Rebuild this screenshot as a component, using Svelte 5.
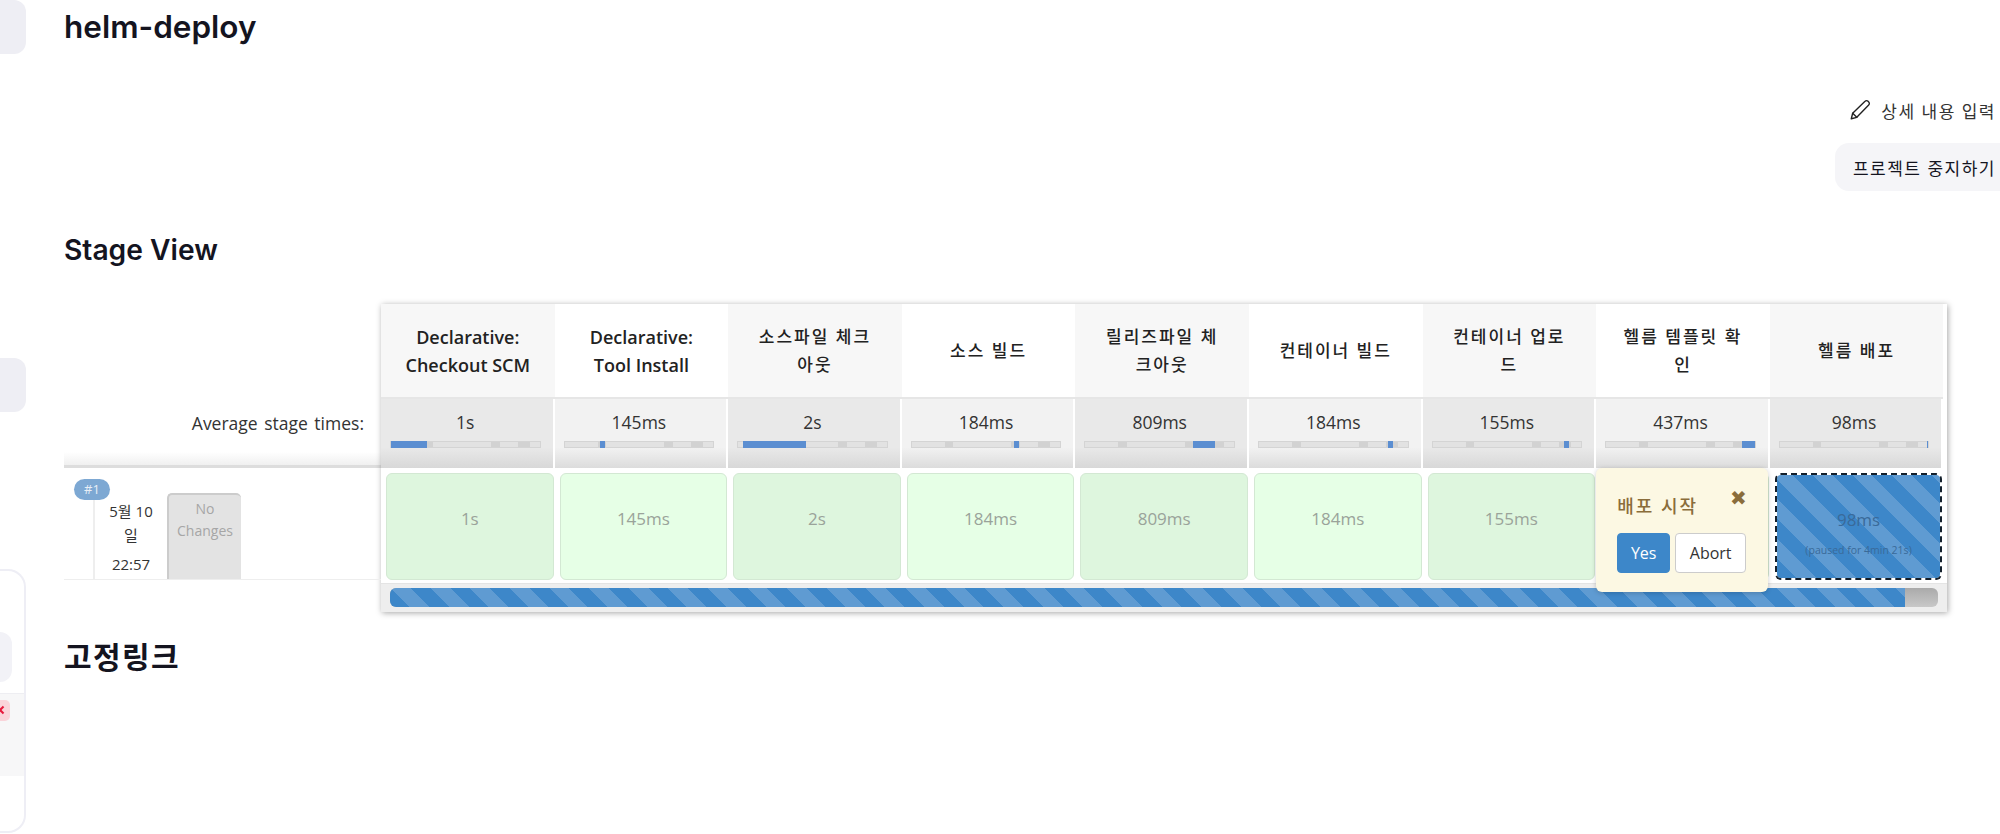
<script lang="ts">
  const stages = [
    { name: "Declarative: Checkout SCM", time: "1s", left: 0, width: 24.5 },
    { name: "Declarative: Tool Install", time: "145ms", left: 24, width: 3.5 },
    { name: "소스파일 체크아웃", time: "2s", left: 3.5, width: 42 },
    { name: "소스 빌드", time: "184ms", left: 68.5, width: 3.5 },
    { name: "릴리즈파일 체크아웃", time: "809ms", left: 72.5, width: 14.5 },
    { name: "컨테이너 빌드", time: "184ms", left: 86.5, width: 3.5 },
    { name: "컨테이너 업로드", time: "155ms", left: 88.5, width: 3.5 },
    { name: "헬름 템플릿 확인", time: "437ms", left: 91.5, width: 8.5 },
    { name: "헬름 배포", time: "98ms", left: 98.8, width: 1.2 },
  ];
</script>

<div class="page">
  <aside class="side">
    <div class="chip top"></div>
    <div class="chip mid"></div>
    <div class="card">
      <div class="card-btn"></div>
      <div class="card-row">
        <span class="card-badge"></span>
      </div>
    </div>
  </aside>

  <main class="main">
    <h1>helm-deploy</h1>

    <div class="actions">
      <a class="edit" href="#edit">
        <svg width="22" height="22" viewBox="0 0 24 24" fill="none" stroke="#222" stroke-width="1.5" stroke-linejoin="round" stroke-linecap="round">
          <path d="M2.5 21.5l1.5-6L17.5 2.5a2.3 2.3 0 0 1 3.3 0l.7.7a2.3 2.3 0 0 1 0 3.3L8.5 20l-6 1.5z" />
          <path d="M4 15.5L8.5 20" />
        </svg>
        <span>상세 내용 입력</span>
      </a>
      <button type="button" class="stop">프로젝트 중지하기</button>
    </div>

    <h2 class="stage-title">Stage View</h2>

    <div class="stage">
      <div class="runs">
        <div class="runs-head"></div>
        <div class="avg-label">Average stage times:</div>
        <div class="run">
          <span class="run-no">#1</span>
          <div class="run-date">
            <div class="day">5월 10일</div>
            <div class="clock">22:57</div>
          </div>
          <div class="run-changes">No Changes</div>
        </div>
      </div>

      <div class="table">
        <div class="row">
          {#each stages as s, i}
            <div class="head" class:odd={i % 2 === 0} class:latin={i < 2}>{s.name}</div>
          {/each}
        </div>
        <div class="row">
          {#each stages as s, i}
            <div class="avg" class:odd={i % 2 === 0}>
              <div class="avg-time">{s.time}</div>
              <div class="tl">
                <span class="tl-on" style="left:{s.left}%;width:{s.width}%"></span>
              </div>
            </div>
          {/each}
        </div>
        <div class="row">
          {#each stages as s, i}
            <div class="slot">
              {#if i === 8}
                <div class="cell paused">
                  <div class="cell-time">{s.time}</div>
                  <div class="cell-note">(paused for 4min 21s)</div>
                </div>
              {:else if i === 7}
                <div class="cell"></div>
                <div class="popup">
                  <div class="popup-top">
                    <span class="popup-title">배포 시작</span>
                    <span class="popup-close">✖</span>
                  </div>
                  <div class="popup-btns">
                    <button type="button" class="yes">Yes</button>
                    <button type="button" class="abort">Abort</button>
                  </div>
                </div>
              {:else}
                <div class="cell" class:odd={i % 2 === 0}>
                  <div class="cell-time">{s.time}</div>
                </div>
              {/if}
            </div>
          {/each}
        </div>
        <div class="progress">
          <div class="progress-track"><div class="progress-bar"></div></div>
        </div>
      </div>
    </div>

    <h2 class="link-title">고정링크</h2>
  </main>
</div>

<style>
  :global(body) {
    background: #fff;
  }

  .page {
    display: flex;
    width: 2000px;
    height: 834px;
    overflow: hidden;
    background: #fff;
    color: #14141f;
    font-family: "Open Sans", "Noto Sans CJK KR", sans-serif;
  }

  .side {
    flex: none;
    width: 26px;
    display: flex;
    flex-direction: column;
  }

  .chip {
    background: #eeeef4;
    border-radius: 0 12px 12px 0;
  }

  .chip.top {
    height: 54px;
  }

  .chip.mid {
    height: 54px;
    margin-top: 304px;
  }

  .card {
    flex: none;
    height: 264px;
    margin-top: 157px;
    box-sizing: border-box;
    padding-top: 61px;
    border: 2px solid #eeeef5;
    border-left: 0;
    border-radius: 0 18px 18px 0;
  }

  .card-btn {
    width: 12px;
    height: 50px;
    background: #f2f2f7;
    border-radius: 0 12px 12px 0;
  }

  .card-row {
    height: 83px;
    margin-top: 11px;
    border-top: 1px solid #eeeef2;
    background: #f7f7f8;
    box-sizing: border-box;
    padding-top: 6px;
  }

  .card-badge {
    display: block;
    position: relative;
    width: 10px;
    height: 21px;
    background: #fad4da;
    border-radius: 0 5px 5px 0;
    overflow: hidden;
  }

  .card-badge::before,
  .card-badge::after {
    content: "";
    position: absolute;
    left: -5px;
    top: 9px;
    width: 10px;
    height: 2px;
    background: #e6193c;
    transform: rotate(45deg);
  }

  .card-badge::after {
    transform: rotate(-45deg);
  }

  .main {
    flex: 1;
    min-width: 0;
    padding: 0 4px 0 38px;
  }

  h1,
  h2 {
    margin: 0;
    font-family: Inter, "Noto Sans CJK KR", sans-serif;
    font-weight: 600;
    color: #14141f;
  }

  h1 {
    font-size: 31.5px;
    line-height: 54px;
  }

  .actions {
    display: flex;
    flex-direction: column;
    align-items: flex-end;
    margin-top: 43px;
    gap: 20px;
  }

  .edit {
    display: flex;
    align-items: center;
    gap: 10px;
    height: 26px;
    color: #333;
    text-decoration: none;
    font-size: 17px;
    letter-spacing: 1.5px;
  }

  .stop {
    height: 48px;
    margin-right: -20px;
    padding: 0 20px 0 18px;
    border: 0;
    border-radius: 14px;
    background: #f5f5f8;
    color: #14141f;
    font-family: inherit;
    font-size: 17px;
    letter-spacing: 1.5px;
    white-space: nowrap;
  }

  .stage-title {
    margin-top: 39px;
    font-size: 28.2px;
    line-height: 40px;
  }

  .stage {
    display: flex;
    margin-top: 34px;
  }

  .runs {
    flex: none;
    width: 317px;
  }

  .runs-head {
    height: 95px;
  }

  .avg-label {
    height: 69px;
    box-sizing: border-box;
    padding: 12px 17px 0 0;
    text-align: right;
    font-size: 17.5px;
    word-spacing: 2px;
    line-height: 24px;
    color: #333;
    background: linear-gradient(to bottom, #fff 80%, #f0f0f0);
    border-bottom: 3px solid #ddd;
  }

  .run {
    position: relative;
    display: flex;
    height: 112px;
    box-sizing: border-box;
    padding: 25px 0 0 29px;
    border-bottom: 1px solid #eee;
  }

  .run-no {
    position: absolute;
    left: 10px;
    top: 11px;
    width: 36px;
    height: 21px;
    border-radius: 11px;
    background: #7da8d3;
    color: #e8eef6;
    font-size: 13px;
    line-height: 21px;
    text-align: center;
  }

  .run-date {
    width: 74px;
    box-sizing: border-box;
    padding: 6px 10px 0;
    border-left: 2px solid #eee;
    text-align: center;
    font-size: 15px;
    line-height: 24px;
    color: #333;
  }

  .clock {
    margin-top: 5px;
  }

  .run-changes {
    width: 74px;
    box-sizing: border-box;
    padding: 3px 4px 0;
    background: #e3e3e3;
    border-top: 2px solid #ccc;
    border-left: 2px solid #ccc;
    border-radius: 5px 5px 0 0;
    color: #a6a6a6;
    font-size: 14px;
    line-height: 22px;
    text-align: center;
  }

  .table {
    flex: none;
    width: 1566px;
    box-shadow: 1px 1px 6px rgb(0 0 0 / 0.35);
    background: #fff;
  }

  .row {
    display: grid;
    grid-template-columns: repeat(9, 173.6px);
  }

  .head {
    height: 95px;
    box-sizing: border-box;
    display: flex;
    align-items: center;
    justify-content: center;
    padding: 0 24px;
    background: #fff;
    text-align: center;
    font-size: 17px;
    letter-spacing: 2px;
    font-weight: 500;
    line-height: 28px;
    color: #222;
    word-break: break-all;
    border-bottom: 2px solid #e6e6e6;
  }

  .head.latin {
    padding: 0 20px;
    font-size: 18px;
    letter-spacing: 0;
    font-weight: 600;
    word-break: normal;
  }

  .head.odd {
    background: #f7f7f7;
  }

  .avg {
    height: 69px;
    box-sizing: border-box;
    padding: 12px 12px 0 9px;
    background: linear-gradient(to bottom, #f2f2f2 70%, #dcdcdc);
    border-right: 2px solid #fff;
    text-align: center;
    font-size: 17.5px;
    color: #333;
  }

  .avg.odd {
    background: linear-gradient(to bottom, #e9e9e9 70%, #d8d8d8);
  }

  .avg-time {
    line-height: 22px;
    margin-bottom: 8px;
  }

  .tl {
    position: relative;
    height: 7px;
    background:
      linear-gradient(to right, transparent 22%, #d2d2d2 22% 28%, transparent 28% 67%, #d2d2d2 67% 73%, transparent 73% 85%, #d2d2d2 85% 93%, transparent 93%),
      #e2e2e2;
    border: 1px solid #d4d4d4;
    box-sizing: border-box;
  }

  .tl-on {
    position: absolute;
    top: -1px;
    bottom: -1px;
    background: #5b8ed1;
  }

  .slot {
    position: relative;
    height: 115px;
    box-sizing: border-box;
    padding: 5px 1px 3px 5px;
  }

  .cell {
    height: 100%;
    box-sizing: border-box;
    padding-top: 33px;
    border: 1px solid #d3e8d3;
    border-radius: 6px;
    background: #e6ffe6;
    text-align: center;
    color: #9aa39a;
    font-size: 17px;
  }

  .cell.odd {
    background: #def6de;
  }

  .cell-time {
    line-height: 24px;
  }

  .cell.paused {
    border: 2px dashed #14202c;
    background: repeating-linear-gradient(45deg, #3d87c9 0 14px, #5f9bd2 14px 28px) padding-box, #fff;
    color: #3a6a99;
  }

  .cell-note {
    margin-top: 11px;
    font-size: 10.5px;
    line-height: 14px;
  }

  .popup {
    position: absolute;
    z-index: 2;
    left: 0;
    top: 0;
    width: 172px;
    height: 124px;
    box-sizing: border-box;
    padding: 24px 21px 0 21px;
    border-radius: 6px;
    background: #fcf8e3;
    box-shadow: 0 1px 5px rgb(0 0 0 / 0.2);
  }

  .popup-top {
    display: flex;
    justify-content: space-between;
    height: 41px;
    color: #8a6d3b;
  }

  .popup-title {
    font-size: 18px;
    letter-spacing: 2px;
    font-weight: 500;
    line-height: 28px;
  }

  .popup-close {
    font-size: 20px;
    line-height: 12px;
  }

  .popup-btns {
    display: flex;
    gap: 5px;
  }

  .popup-btns button {
    height: 40px;
    border-radius: 4px;
    font-family: inherit;
    font-size: 16px;
  }

  .yes {
    width: 53px;
    border: 1px solid #3d87c9;
    background: #3d87c9;
    color: #fff;
  }

  .abort {
    width: 71px;
    border: 1px solid #ccc;
    background: #fff;
    color: #333;
  }

  .progress {
    height: 29px;
    box-sizing: border-box;
    padding: 4px 9px 5px 9px;
    background: #eee;
    border-top: 1px solid #e4e4e4;
  }

  .progress-track {
    height: 100%;
    border-radius: 6px;
    overflow: hidden;
    background: linear-gradient(to bottom, #aaa, #c8c8c8);
  }

  .progress-bar {
    width: 97.9%;
    height: 100%;
    background: repeating-linear-gradient(45deg, #3d87c9 0 14px, #5f9bd2 14px 28px);
  }

  .link-title {
    margin-top: 25px;
    font-size: 30px;
    letter-spacing: 1.4px;
    line-height: 40px;
  }
</style>
